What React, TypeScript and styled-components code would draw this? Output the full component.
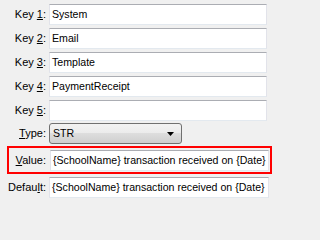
import React from "react";
import styled, { createGlobalStyle } from "styled-components";

const Global = createGlobalStyle`
  html, body {
    margin: 0;
    padding: 0;
    background: #f0f0f0;
    font-family: "Liberation Sans", Arial, sans-serif;
    font-size: 11px;
    color: #000;
  }
`;

const Form = styled.div`
  display: flex;
  flex-direction: column;
  padding-top: 4px;
  width: 273px;
  height: 201px;
  box-sizing: border-box;
  overflow: hidden;
`;

const Row = styled.div<{ $gap?: number }>`
  display: flex;
  align-items: center;
  height: 21px;
  margin-bottom: ${(p) => (p.$gap ?? 3)}px;
`;

const Label = styled.label<{ $w?: number; $mr?: number }>`
  width: ${(p) => p.$w ?? 46}px;
  margin-right: ${(p) => p.$mr ?? 3}px;
  text-align: right;
  white-space: nowrap;
  flex: none;
  line-height: 13px;
`;

const Field = styled.div<{ $w: number }>`
  width: ${(p) => p.$w}px;
  height: 21px;
  box-sizing: border-box;
  flex: none;
  background: #fff;
  border: 1px solid #e2e3ea;
  border-top-color: #abadb3;
  border-bottom-color: #e3e9ef;
  padding: 0 1px 0 2px;
  display: flex;
  align-items: center;
  white-space: nowrap;
  overflow: hidden;
  font-size: 10.6px;
  line-height: 13px;
`;

const Combo = styled.div`
  width: 133px;
  height: 21px;
  box-sizing: border-box;
  flex: none;
  border: 1px solid #707070;
  border-radius: 3px;
  background: linear-gradient(#f2f2f2 0%, #ebebeb 50%, #dddddd 50%, #cfcfcf 100%);
  display: flex;
  align-items: center;
  padding: 0 2px 0 3px;
  font-size: 10.6px;
  line-height: 13px;
`;

const ComboText = styled.span`
  flex: 1;
`;

const Arrow = styled.svg`
  width: 7px;
  height: 4px;
  margin-right: 5px;
  display: block;
`;

const Highlight = styled.div`
  margin-left: 7px;
  width: 265px;
  height: 28px;
  box-sizing: border-box;
  border: 2px solid #ff0000;
  padding-top: 2px;
  margin-bottom: 3px;
`;

const HRow = styled.div`
  display: flex;
  align-items: center;
  height: 21px;
`;

const Key = ({ n, value }: { n: number; value: string }) => (
  <Row>
    <Label>
      Key <u>{n}</u>:
    </Label>
    <Field $w={218}>{value}</Field>
  </Row>
);

const template = "{SchoolName} transaction received on {Date}";

export default function App() {
  return (
    <>
      <Global />
      <Form>
        <Key n={1} value="System" />
        <Key n={2} value="Email" />
        <Key n={3} value="Template" />
        <Key n={4} value="PaymentReceipt" />
        <Row $gap={2}>
          <Label>
            Key <u>5</u>:
          </Label>
          <Field $w={218} />
        </Row>
        <Row $gap={2}>
          <Label>
            <u>T</u>ype:
          </Label>
          <Combo>
            <ComboText>STR</ComboText>
            <Arrow viewBox="0 0 7 4">
              <path d="M0 0 H7 L3.5 4 Z" fill="#000" />
            </Arrow>
          </Combo>
        </Row>
        <Highlight>
          <HRow>
            <Label $w={37} $mr={4}>
              <u>V</u>alue:
            </Label>
            <Field $w={219}>{template}</Field>
          </HRow>
        </Highlight>
        <Row>
          <Label>
            Defau<u>l</u>t:
          </Label>
          <Field $w={220}>{template}</Field>
        </Row>
      </Form>
    </>
  );
}
